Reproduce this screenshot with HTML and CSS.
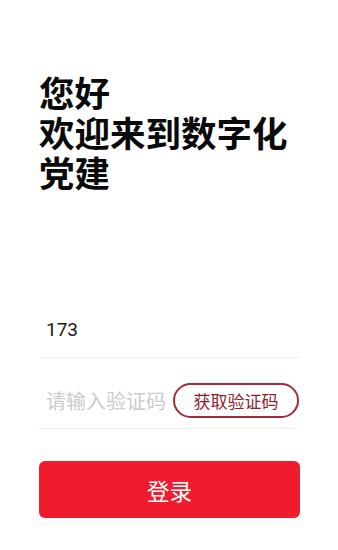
FILE: index.html
```html
<!DOCTYPE html>
<html lang="zh-CN">
<head>
<meta charset="utf-8">
<title>登录</title>
<link rel="stylesheet" href="styles.css">
</head>
<body>
<main class="page">
  <h1 class="title">您好<br>欢迎来到数字化<br>党建</h1>
  <form class="form">
    <div class="row row-phone">
      <input class="field" type="tel" value="173">
    </div>
    <div class="row row-code">
      <input class="field" type="text" placeholder="请输入验证码">
      <button class="code-btn" type="button">获取验证码</button>
    </div>
    <button class="login-btn" type="button">登录</button>
  </form>
</main>
</body>
</html>
```

FILE: styles.css
```css
* { box-sizing: border-box; }
html, body {
  margin: 0;
  padding: 0;
  background: #fff;
}
body {
  font-family: "Noto Sans CJK SC", "Noto Sans", sans-serif;
  width: 338px;
  height: 550px;
  overflow: hidden;
}
.page {
  padding: 0 38px 0 39px;
}
.title {
  margin: 72px 0 109px 0;
  font-size: 35.5px;
  line-height: 40px;
  font-weight: 700;
  color: #0a0a0a;
}
.form {
  display: flex;
  flex-direction: column;
}
.row {
  display: flex;
  align-items: center;
  border-bottom: 1px solid #f2f2f2;
}
.row-phone {
  height: 57px;
}
.row-code {
  height: 71px;
  padding-top: 14px;
}
.field {
  flex: 1;
  min-width: 0;
  border: 0;
  outline: 0;
  padding: 0 0 0 7px;
  margin: 0;
  background: transparent;
  font-family: "Roboto", "Noto Sans CJK SC", sans-serif;
  font-size: 19px;
  color: #1a1a1a;
}
.row-code .field {
  font-family: "Noto Sans CJK SC", sans-serif;
  font-size: 20px;
}
.field::placeholder {
  color: #cbcbcb;
}
.code-btn {
  flex: none;
  width: 126px;
  height: 35px;
  margin-right: 1px;
  border: 2px solid #a52a3c;
  border-radius: 18px;
  background: #fff;
  color: #8e1e2e;
  font-family: "Noto Sans CJK SC", sans-serif;
  font-size: 17px;
  padding: 0;
}
.login-btn {
  margin-top: 32px;
  height: 57px;
  border: 0;
  border-radius: 6px;
  background: #f01b2d;
  color: #fff;
  font-family: "Noto Sans CJK SC", sans-serif;
  font-size: 22.5px;
  padding: 0;
}
```
